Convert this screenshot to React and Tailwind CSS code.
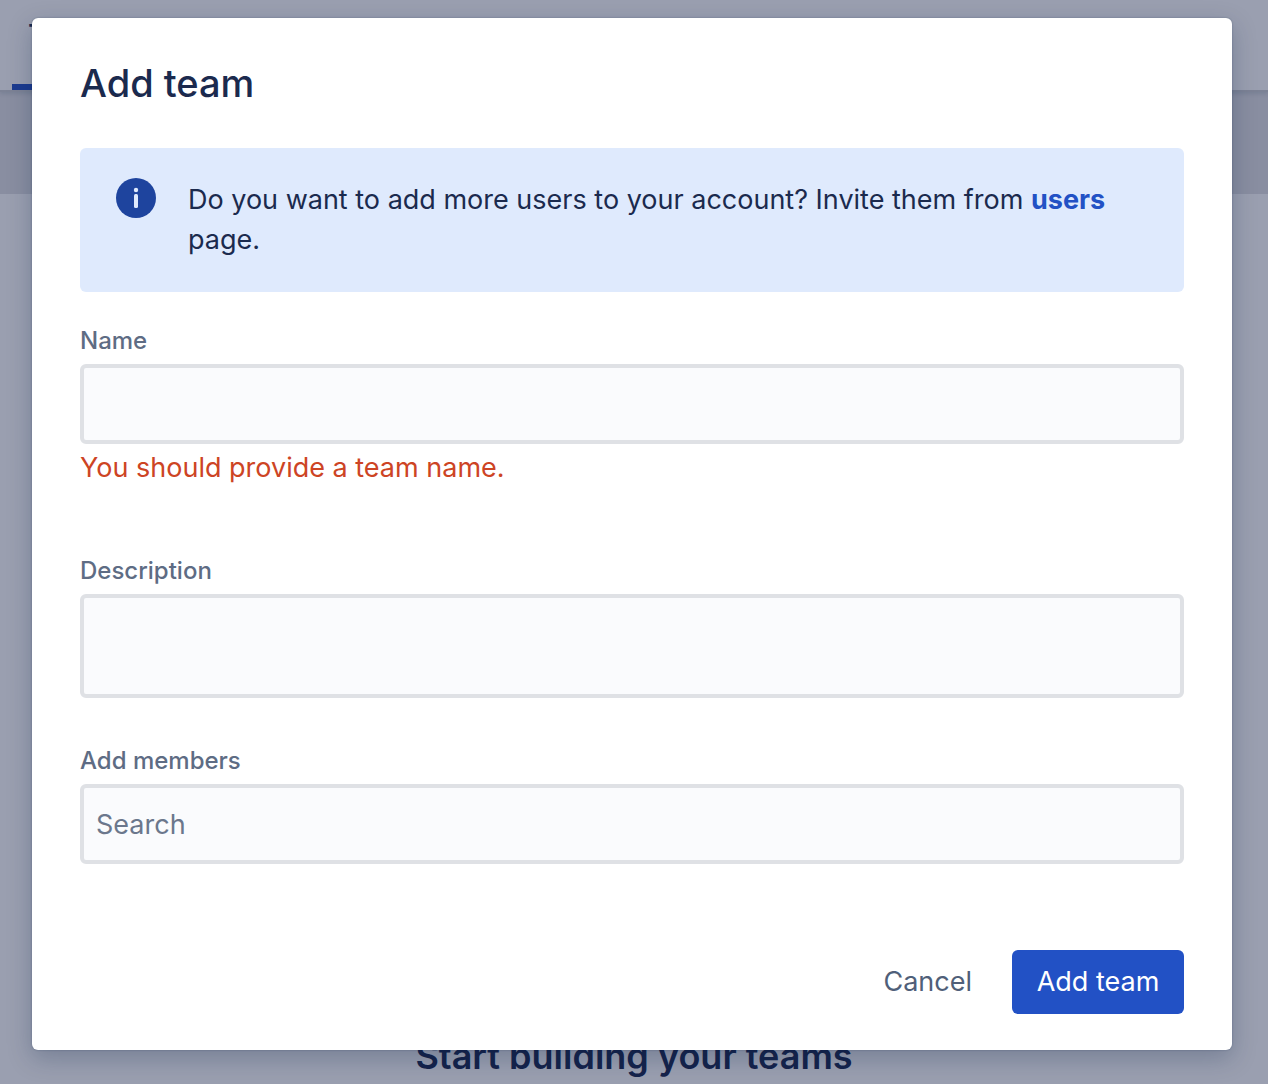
import React from "react";

function Field({ id, label, children, className }) {
  return (
    <div className={className}>
      <label htmlFor={id} className="mb-[7px] block text-[24px] leading-8 font-medium text-[#5e6c84]">
        {label}
      </label>
      {children}
    </div>
  );
}

const inputStyle =
  "block w-full rounded-md border-4 border-[#dfe1e5] bg-[#fafbfd] px-3 text-[27px] text-[#172b4d] placeholder:text-[#6b778c] outline-none";

export default function App() {
  return (
    <div className="relative min-h-screen overflow-hidden bg-[#9a9fb0] font-['Inter','Liberation_Sans',sans-serif] text-[#1b2a4e]">
      <header className="relative flex h-[90px] pl-3 shadow-[0_2px_0_#7c8295,0_4px_4px_rgba(9,30,66,0.12)]">
        <div className="h-full border-b-6 border-[#1c3b8f] px-4 pt-[14px] text-[28px] font-medium">Teams</div>
      </header>
      <div className="h-[104px] bg-[#898ea1]" />
      <h2 className="mt-[836px] h-[52px] text-center text-[36px] leading-[52px] font-semibold text-[#15234b]">
        Start building your teams
      </h2>
      <div className="absolute inset-0 pt-[18px] pr-9 pl-8">
        <section
          role="dialog"
          aria-labelledby="dialog-title"
          className="rounded-md bg-white px-12 pt-10 pb-9 shadow-[0_0_2px_rgba(9,30,66,0.3),0_8px_24px_rgba(9,30,66,0.25)]"
        >
          <h1 id="dialog-title" className="text-[38px] leading-[50px] font-medium">
            Add team
          </h1>
          <div className="mt-10 flex gap-8 rounded-md bg-[#dfeafd] px-9 py-8">
            <svg viewBox="0 0 40 40" className="-mt-0.5 size-10 shrink-0" aria-hidden="true">
              <circle cx="20" cy="20" r="20" fill="#1e449e" />
              <circle cx="20" cy="12" r="2.2" fill="#dfeafd" />
              <rect x="18" y="16" width="4" height="14" rx="1.5" fill="#dfeafd" />
            </svg>
            <p className="text-[27px] leading-10">
              Do you want to add more users to your account? Invite them from{" "}
              <a href="#users" className="font-bold text-[#2251c5]">users</a> page.
            </p>
          </div>
          <form onSubmit={(e) => e.preventDefault()}>
            <Field id="name" label="Name" className="mt-[33px]">
              <input id="name" type="text" aria-describedby="name-error" className={inputStyle + " h-20"} />
              <p id="name-error" className="mt-1 text-[27px] leading-10 text-[#cd4424]">
                You should provide a team name.
              </p>
            </Field>
            <Field id="description" label="Description" className="mt-[67px]">
              <textarea id="description" className={inputStyle + " h-26 resize-none"} />
            </Field>
            <Field id="members" label="Add members" className="mt-[47px]">
              <input id="members" type="text" placeholder="Search" className={inputStyle + " h-20"} />
            </Field>
            <div className="mt-[86px] flex justify-end gap-4">
              <button type="button" className="h-16 px-6 text-[27px] text-[#505f79]">Cancel</button>
              <button type="submit" className="h-16 min-w-43 rounded-md bg-[#2251c5] px-6 text-[27px] text-white">Add team</button>
            </div>
          </form>
        </section>
      </div>
    </div>
  );
}
